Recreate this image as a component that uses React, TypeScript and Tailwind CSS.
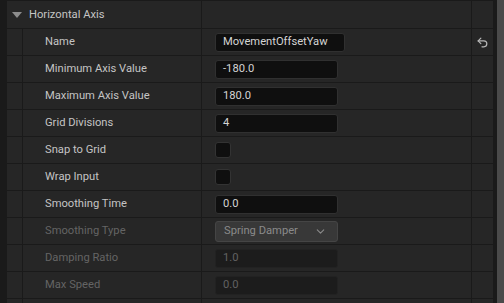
import { ChevronDown, Undo2 } from "lucide-react";

type Row = {
  label: string;
  kind: "text" | "check" | "select";
  value?: string;
  wide?: boolean;
  disabled?: boolean;
  reset?: boolean;
};

const rows: Row[] = [
  { label: "Name", kind: "text", value: "MovementOffsetYaw", wide: true, reset: true },
  { label: "Minimum Axis Value", kind: "text", value: "-180.0" },
  { label: "Maximum Axis Value", kind: "text", value: "180.0" },
  { label: "Grid Divisions", kind: "text", value: "4" },
  { label: "Snap to Grid", kind: "check" },
  { label: "Wrap Input", kind: "check" },
  { label: "Smoothing Time", kind: "text", value: "0.0" },
  { label: "Smoothing Type", kind: "select", value: "Spring Damper", disabled: true },
  { label: "Damping Ratio", kind: "text", value: "1.0", disabled: true },
  { label: "Max Speed", kind: "text", value: "0.0", disabled: true },
];

const ValueWidget = ({ row }: { row: Row }) => {
  if (row.kind === "check") {
    return <div className="w-4 h-4 rounded-[3px] bg-[#0f0f0f] border border-[#333333]" />;
  }
  if (row.kind === "select") {
    return (
      <div className="w-[123px] h-[21px] rounded-[3px] bg-[#383838] border border-[#454545] flex items-center justify-between pl-[8px] pr-[10px] text-[#8a8a8a]">
        <span>{row.value}</span>
        <ChevronDown size={13} strokeWidth={2} />
      </div>
    );
  }
  return (
    <div
      className={`${row.wide ? "w-[130px]" : "w-[123px]"} h-[19px] rounded-[3px] border flex items-center pl-[7px] ${
        row.disabled
          ? "bg-[#1c1c1c] border-[#222222] text-[#626262]"
          : "bg-[#0f0f0f] border-[#303030] text-[#d4d4d4]"
      }`}
    >
      {row.value}
    </div>
  );
};

export default function App() {
  return (
    <div
      className="w-[504px] h-[303px] overflow-hidden flex bg-[#1a1a1a] text-[11.2px] leading-none"
      style={{ fontFamily: "Roboto, 'Liberation Sans', sans-serif" }}
    >
      <div className="w-[493px] flex flex-col gap-px pt-px pl-[7px]">
        {/* Category header */}
        <div className="h-[27px] shrink-0 flex gap-px">
          <div className="w-[194px] bg-[#262626] flex items-center">
            <svg width="10" height="6" viewBox="0 0 10 6" className="ml-[5px] mr-[7px]">
              <polygon points="0,0 10,0 5,6" fill="#8c8c8c" />
            </svg>
            <span className="text-[#c4c4c4]">Horizontal Axis</span>
          </div>
          <div className="w-[269px] bg-[#262626]" />
          <div className="flex-1 bg-[#262626]" />
        </div>

        {rows.map((row) => (
          <div key={row.label} className="h-[26px] shrink-0 flex gap-px">
            <div className="w-[15px] bg-[#262626]" />
            <div
              className={`w-[178px] bg-[#262626] flex items-center pl-[22px] ${
                row.disabled ? "text-[#646464]" : "text-[#c4c4c4]"
              }`}
            >
              {row.label}
            </div>
            <div className="w-[269px] bg-[#262626] flex items-center pl-[13px]">
              <ValueWidget row={row} />
            </div>
            <div className="flex-1 bg-[#262626] flex items-center justify-center text-[#b8b8b8]">
              {row.reset && <Undo2 size={13} strokeWidth={2.2} />}
            </div>
          </div>
        ))}

        <div className="h-[26px] shrink-0 flex gap-px">
          <div className="w-[15px] bg-[#262626]" />
          <div className="w-[178px] bg-[#262626]" />
          <div className="w-[269px] bg-[#262626]" />
          <div className="flex-1 bg-[#262626]" />
        </div>
      </div>
      <div className="flex-1 flex justify-end">
        <div className="w-[7px] bg-[#4a4a4a]" />
      </div>
    </div>
  );
}
